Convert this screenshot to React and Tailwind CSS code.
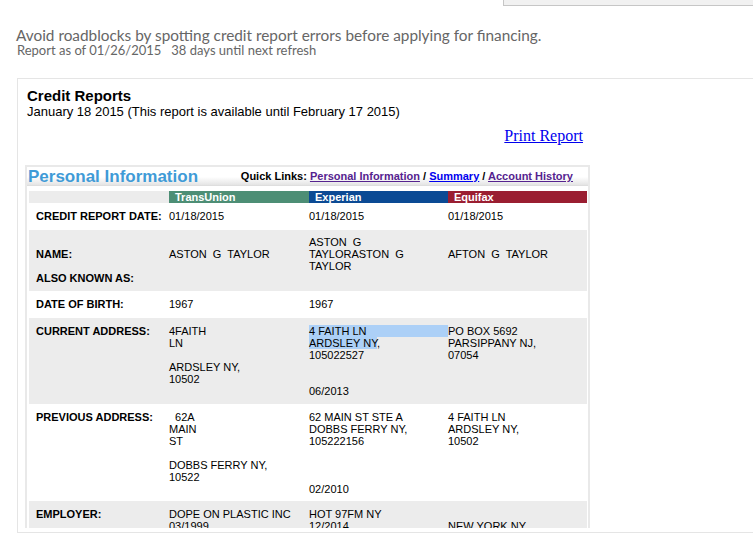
import React from 'react';

const sans = { fontFamily: '"Liberation Sans", Arial, sans-serif' };

// one row of the personal information grid
// lines are given as arrays so the wrapping matches the report exactly
const Row = ({ gray, label, cells, className = '', align = 'items-start', labelExtra }) => (
  <div className={`grid grid-cols-[140px_140px_139px_139px] ${align} ${gray ? 'bg-[#ececec]' : 'bg-white'} ${className}`}>
    <div className="pl-[7px] font-bold">
      {label && <div className="h-[12px] leading-[12px] whitespace-pre">{label}</div>}
      {labelExtra}
    </div>
    {cells.map((lines, i) => (
      <div key={i}>
        {lines.map((line, j) => (
          <div key={j} className="h-[12px] leading-[12px] whitespace-pre">
            {line}
          </div>
        ))}
      </div>
    ))}
  </div>
);

const B = '\u00a0';

const App = () => {
  return (
    <div className="w-[753px] h-[554px] overflow-hidden bg-white">
      {/* bottom edge of the search box above */}
      <div className="flex justify-end">
        <div className="w-[250px] h-[6px] border-l border-b border-[#c6c6c6] bg-[#f1f1f1]" />
      </div>

      <div className="pl-4 mt-[22px] text-[#666]" style={{ fontFamily: 'Lato, "Open Sans", sans-serif' }}>
        <div className="text-[15.35px] leading-[15px]">
          Avoid roadblocks by spotting credit report errors before applying for financing.
        </div>
        <div className="text-[13px] leading-[14px] pl-[1px] whitespace-pre">
          Report as of 01/26/2015{'   '}38 days until next refresh
        </div>
      </div>

      <div
        className="ml-[17px] mt-[21px] w-[800px] h-[455px] border border-r-0 border-[#e5e5e5] pl-[7px] text-black"
        style={sans}
      >
        <div className="h-[449px] overflow-hidden">
          <div className="pl-[2px] pt-[8px] text-[15px] leading-[17px] font-bold">Credit Reports</div>
          <div className="pl-[2px] text-[13px] leading-[16px]">
            January 18 2015 (This report is available until February 17 2015)
          </div>
          <div className="w-[565px] mt-[4px] pr-[7px] text-right">
            <a
              href="#"
              className="text-[16px] leading-[19px] text-[#0000ee] underline"
              style={{ fontFamily: '"Liberation Serif", "Times New Roman", serif' }}
            >
              Print Report
            </a>
          </div>

          {/* personal information box */}
          <div className="mt-[17px] w-[565px] border-2 border-[#e9e9e9] text-[11px]">
            <div className="h-[19px] flex items-center justify-between pl-[1px] pr-[15px] bg-gradient-to-b from-white from-55% to-[#e4e4e4] border-b border-[#dedede]">
              <span className="text-[17px] font-bold text-[#3f9bd7] leading-[19px]">Personal Information</span>
              <span className="font-bold">
                Quick Links:{' '}
                <a href="#" className="underline text-[#55238f]">Personal Information</a>
                {' / '}
                <a href="#" className="underline text-[#0000ee]">Summary</a>
                {' / '}
                <a href="#" className="underline text-[#55238f]">Account History</a>
              </span>
            </div>

            <div className="mt-[5px] pl-[2px] pr-[1px]">
              <div className="grid grid-cols-[140px_140px_139px_139px] h-[12px] leading-[12px] font-bold text-white">
                <div className="bg-[#ececec]" />
                <div className="bg-[#4d8e75] pl-[6px]">TransUnion</div>
                <div className="bg-[#0b4a94] pl-[6px]">Experian</div>
                <div className="bg-[#9a1e31] pl-[6px]">Equifax</div>
              </div>

              <Row
                className="pt-[7px] pb-[8px]"
                label="CREDIT REPORT DATE:"
                cells={[['01/18/2015'], ['01/18/2015'], ['01/18/2015']]}
              />

              <Row
                gray
                align="items-center"
                className="pt-[6px]"
                label="NAME:"
                cells={[['ASTON  G  TAYLOR'], ['ASTON  G', 'TAYLORASTON  G', 'TAYLOR'], ['AFTON  G  TAYLOR']]}
              />
              <Row gray className="pb-[7px]" label="ALSO KNOWN AS:" cells={[[B], [B], [B]]} />

              <Row
                className="pt-[7px] pb-[8px]"
                label="DATE OF BIRTH:"
                cells={[['1967'], ['1967'], [B]]}
              />

              <div className="grid grid-cols-[140px_140px_139px_139px] items-start bg-[#ececec] pt-[7px] pb-[7px]">
                <div className="pl-[7px] font-bold h-[12px] leading-[12px]">CURRENT ADDRESS:</div>
                <div>
                  {['4FAITH', 'LN', B, 'ARDSLEY NY,', '10502'].map((l, i) => (
                    <div key={i} className="h-[12px] leading-[12px]">{l}</div>
                  ))}
                </div>
                <div>
                  <div className="h-[12px] leading-[12px] bg-[#acd0f7]">4 FAITH LN</div>
                  <div className="h-[12px] leading-[12px]">
                    <span className="bg-[#acd0f7]">ARDSLEY NY</span>,
                  </div>
                  {['105022527', B, B, '06/2013'].map((l, i) => (
                    <div key={i} className="h-[12px] leading-[12px]">{l}</div>
                  ))}
                </div>
                <div>
                  {['PO BOX 5692', 'PARSIPPANY NJ,', '07054'].map((l, i) => (
                    <div key={i} className="h-[12px] leading-[12px]">{l}</div>
                  ))}
                </div>
              </div>

              <Row
                className="pt-[7px] pb-[6px]"
                label="PREVIOUS ADDRESS:"
                cells={[
                  ['\u00a0\u00a062A', 'MAIN', 'ST', B, 'DOBBS FERRY NY,', '10522'],
                  ['62 MAIN ST STE A', 'DOBBS FERRY NY,', '105222156', B, B, B, '02/2010'],
                  ['4 FAITH LN', 'ARDSLEY NY,', '10502'],
                ]}
              />

              <Row
                gray
                className="pt-[7px] pb-[6px]"
                label="EMPLOYER:"
                cells={[
                  ['DOPE ON PLASTIC INC', '03/1999', B],
                  ['HOT 97FM NY', '12/2014', B],
                  [B, 'NEW YORK NY,', B],
                ]}
              />
            </div>
          </div>
        </div>
      </div>
    </div>
  );
};

export default App;
